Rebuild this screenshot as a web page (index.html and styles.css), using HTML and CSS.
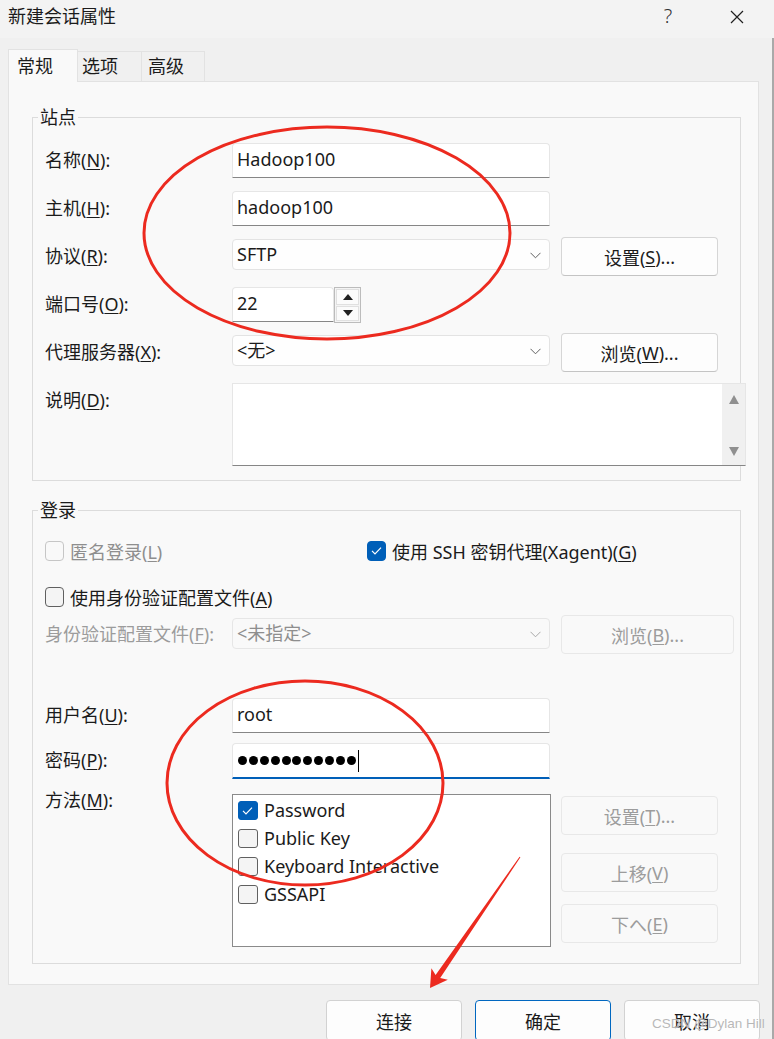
FILE: index.html
```html
<!DOCTYPE html>
<html lang="zh-CN">
<head>
<meta charset="utf-8">
<title>新建会话属性</title>
<link rel="stylesheet" href="styles.css">
</head>
<body>
<div class="window">
  <div class="titlebar">
    <span class="title">新建会话属性</span>
    <span class="help">?</span>
    <span class="close"><svg width="16" height="16" viewBox="0 0 16 16"><path d="M2 2 L14 14 M14 2 L2 14" stroke="#1f1f1f" stroke-width="1.2" fill="none"/></svg></span>
  </div>

  <div class="tabs">
    <div class="tab active">常规</div>
    <div class="tab">选项</div>
    <div class="tab">高级</div>
  </div>

  <div class="page">
    <div class="group station">
      <div class="legend">站点</div>

      <div class="row">
        <span class="lbl">名称(<u>N</u>):</span>
        <div class="input">Hadoop100</div>
      </div>
      <div class="row">
        <span class="lbl">主机(<u>H</u>):</span>
        <div class="input">hadoop100</div>
      </div>
      <div class="row">
        <span class="lbl">协议(<u>R</u>):</span>
        <div class="select"><span>SFTP</span><svg class="chev" width="11" height="7" viewBox="0 0 11 7"><path d="M0.5 0.8 L5.5 5.8 L10.5 0.8" stroke="#616161" stroke-width="1" fill="none"/></svg></div>
        <div class="btn">设置(<u>S</u>)...</div>
      </div>
      <div class="row">
        <span class="lbl">端口号(<u>O</u>):</span>
        <div class="input port">22</div>
        <div class="spin">
          <div class="spin-btn"><svg width="10" height="6" viewBox="0 0 10 6"><path d="M0 6 L5 0 L10 6 Z" fill="#1f1f1f"/></svg></div>
          <div class="spin-btn"><svg width="10" height="6" viewBox="0 0 10 6"><path d="M0 0 L5 6 L10 0 Z" fill="#1f1f1f"/></svg></div>
        </div>
      </div>
      <div class="row">
        <span class="lbl">代理服务器(<u>X</u>):</span>
        <div class="select"><span>&lt;无&gt;</span><svg class="chev" width="11" height="7" viewBox="0 0 11 7"><path d="M0.5 0.8 L5.5 5.8 L10.5 0.8" stroke="#616161" stroke-width="1" fill="none"/></svg></div>
        <div class="btn">浏览(<u>W</u>)...</div>
      </div>
      <div class="row desc-row">
        <span class="lbl">说明(<u>D</u>):</span>
        <div class="textarea">
          <div class="ta-body"></div>
          <div class="ta-scroll">
            <svg width="10" height="9" viewBox="0 0 10 9"><path d="M0 9 L5 0 L10 9 Z" fill="#8f8f8f"/></svg>
            <svg width="10" height="9" viewBox="0 0 10 9"><path d="M0 0 L5 9 L10 0 Z" fill="#8f8f8f"/></svg>
          </div>
        </div>
      </div>
    </div>

    <div class="group login">
      <div class="legend">登录</div>

      <div class="cbrow first">
        <div class="cbitem anon disabled">
          <span class="cb"></span><span>匿名登录(<u>L</u>)</span>
        </div>
        <div class="cbitem">
          <span class="cb checked"><svg width="19" height="19" viewBox="0 0 19 19"><path d="M5 9.8 L8 12.8 L14 6.6" stroke="#fff" stroke-width="1.2" fill="none"/></svg></span><span>使用 SSH 密钥代理(Xagent)(<u>G</u>)</span>
        </div>
      </div>
      <div class="cbrow second">
        <div class="cbitem">
          <span class="cb"></span><span>使用身份验证配置文件(<u>A</u>)</span>
        </div>
      </div>
      <div class="row profile-row">
        <span class="lbl disabled">身份验证配置文件(<u>F</u>):</span>
        <div class="select disabled"><span>&lt;未指定&gt;</span><svg class="chev" width="11" height="7" viewBox="0 0 11 7"><path d="M0.5 0.8 L5.5 5.8 L10.5 0.8" stroke="#a8a8a8" stroke-width="1" fill="none"/></svg></div>
        <div class="btn disabled wide">浏览(<u>B</u>)...</div>
      </div>
      <div class="row user-row">
        <span class="lbl">用户名(<u>U</u>):</span>
        <div class="input">root</div>
      </div>
      <div class="row pass-row">
        <span class="lbl">密码(<u>P</u>):</span>
        <div class="input focused">
          <span class="dots"><i></i><i></i><i></i><i></i><i></i><i></i><i></i><i></i><i></i><i></i><i></i></span><span class="caret"></span>
        </div>
      </div>
      <div class="row method-row">
        <span class="lbl method-lbl">方法(<u>M</u>):</span>
        <div class="list">
          <div class="li"><span class="cb small checked"><svg width="19" height="19" viewBox="0 0 19 19"><path d="M5 9.8 L8 12.8 L14 6.6" stroke="#fff" stroke-width="1.2" fill="none"/></svg></span><span>Password</span></div>
          <div class="li"><span class="cb small"></span><span>Public Key</span></div>
          <div class="li"><span class="cb small"></span><span>Keyboard Interactive</span></div>
          <div class="li"><span class="cb small"></span><span>GSSAPI</span></div>
        </div>
        <div class="side-btns">
          <div class="btn disabled b1">设置(<u>T</u>)...</div>
          <div class="btn disabled b2">上移(<u>V</u>)</div>
          <div class="btn disabled b3">下へ(<u>E</u>)</div>
        </div>
      </div>
    </div>
  </div>

  <div class="footer">
    <div class="fbtn">连接</div>
    <div class="fbtn default">确定</div>
    <div class="fbtn">取消</div>
  </div>

  <div class="edge"></div>

  <svg class="annot" width="774" height="1039" viewBox="0 0 774 1039">
    <ellipse cx="327" cy="233" rx="183" ry="106" fill="none" stroke="#ec2a1f" stroke-width="3"/>
    <ellipse cx="305" cy="783" rx="138" ry="102" fill="none" stroke="#ec2a1f" stroke-width="3"/>
    <polygon points="430,988 447.8,979.7 440.2,978.1 520.4,857.3 519.6,856.7 435.6,974.9 431.4,968.3" fill="#ec2a1f"/>
  </svg>
  <div class="watermark">CSDN @Dylan Hill</div>
</div>
</body>
</html>
```

FILE: styles.css
```css
html, body {
  margin: 0;
  padding: 0;
}
body {
  background: #f0f0f0;
  font-family: "Noto Sans", "Noto Sans CJK SC", sans-serif;
  font-size: 18px;
  color: #1b1b1b;
}
u {
  text-decoration: underline;
  text-underline-offset: 2px;
  text-decoration-thickness: 1px;
}
.window {
  position: relative;
  width: 774px;
  height: 1039px;
  overflow: hidden;
  background: #f0f0f0;
}

/* title bar */
.titlebar {
  height: 38px;
  background: #f3f3f3;
  display: flex;
  align-items: flex-start;
  line-height: 32px;
}
.title {
  margin-left: 8px;
  font-size: 18px;
  flex: 1;
}
.help {
  font-size: 20px;
  font-weight: 300;
  color: #333;
  width: 20px;
  text-align: center;
  margin-right: 51px;
  font-family: "Noto Sans", sans-serif;
}
.close {
  width: 16px;
  height: 16px;
  margin-top: 9px;
  margin-right: 29px;
}
.close svg { display: block; }

/* tabs */
.tabs {
  margin-top: 12px;
  height: 31px;
  padding-left: 8px;
  display: flex;
  align-items: flex-end;
  position: relative;
  z-index: 2;
}
.tab {
  box-sizing: border-box;
  height: 30px;
  border: 1px solid #e2e2e2;
  border-bottom: none;
  background: #f0f0f0;
  line-height: 28px;
  text-align: left;
  margin-left: -1px;
}
.tab.active {
  width: 70px;
  height: 33px;
  margin-left: 0;
  margin-bottom: -1px;
  background: #f9f9f9;
  line-height: 32px;
  padding-left: 8px;
}
.tab:nth-child(2) { width: 65px; padding-left: 4px; }
.tab:nth-child(3) { width: 64px; padding-left: 6px; }

/* page */
.page {
  box-sizing: border-box;
  margin-left: 8px;
  width: 751px;
  height: 904px;
  border: 1px solid #e2e2e2;
  background: #f9f9f9;
  padding: 35px 0 0 23px;
}
.group {
  box-sizing: border-box;
  width: 709px;
  border: 1px solid #dcdcdc;
  padding: 0 0 14px 12px;
}
.legend {
  width: fit-content;
  height: 24px;
  line-height: 24px;
  margin: -13px 0 0 -7px;
  padding: 0 2px;
  background: #f9f9f9;
}
.station .legend + .row { margin-top: 14px; }
.login {
  margin-top: 29px;
  padding-bottom: 16px;
}

/* rows */
.row {
  display: flex;
  align-items: flex-start;
  height: 35px;
  margin-bottom: 13px;
}
.row > * { flex: none; }
.row:last-child { margin-bottom: 0; }
.lbl {
  width: 187px;
  height: 35px;
  line-height: 35px;
  white-space: nowrap;
}
.lbl.disabled { color: #9c9c9c; }
.input {
  box-sizing: border-box;
  width: 318px;
  height: 35px;
  background: #ffffff;
  border: 1px solid #e6e6e6;
  border-bottom-color: #868686;
  border-radius: 4px 4px 0 0;
  padding-left: 4px;
  line-height: 31px;
}
.input.port { width: 102px; }
.spin {
  box-sizing: border-box;
  width: 27px;
  height: 36px;
  border: 1px solid #bcbcbc;
  background: #f4f4f4;
  padding: 1px;
  display: flex;
  flex-direction: column;
  gap: 1px;
}
.spin-btn {
  flex: 1;
  background: #fbfbfb;
  border: 1px solid #e0e0e0;
  display: flex;
  align-items: center;
  justify-content: center;
}
.spin-btn svg { display: block; }

.select {
  box-sizing: border-box;
  width: 318px;
  height: 31px;
  background: #fefefe;
  border: 1px solid #e3e3e3;
  border-radius: 4px;
  padding: 0 8px 0 4px;
  display: flex;
  align-items: center;
  justify-content: space-between;
  line-height: 29px;
}
.select .chev { display: block; margin-top: 1px; }
.select.disabled {
  background: #f9f9f9;
  border-color: #e6e6e6;
  color: #8e8e8e;
}

.btn {
  box-sizing: border-box;
  width: 157px;
  height: 39px;
  margin-left: 11px;
  margin-top: -2px;
  border: 1px solid #d6d6d6;
  border-bottom-color: #c4c4c4;
  border-radius: 4px;
  background: #fdfdfd;
  display: flex;
  align-items: center;
  justify-content: center;
  flex: none;
}
.btn.disabled {
  background: #f9f9f9;
  border-color: #e8e8e8;
  color: #9c9c9c;
}
.btn.wide { width: 173px; margin-top: -3px; }

.desc-row { height: 83px; }
.textarea {
  box-sizing: border-box;
  width: 514px;
  height: 83px;
  background: #ffffff;
  border: 1px solid #e6e6e6;
  border-bottom-color: #868686;
  display: flex;
}
.ta-body { flex: 1; }
.ta-scroll {
  width: 23px;
  background: #f0f0f0;
  display: flex;
  flex-direction: column;
  align-items: center;
  justify-content: space-between;
  padding: 11px 0 9px;
}
.ta-scroll svg { display: block; }

/* login group */
.cbrow {
  display: flex;
  align-items: center;
  height: 24px;
}
.cbrow.first { margin-top: 17px; }
.cbrow.second { margin-top: 22px; }
.cbitem {
  display: flex;
  align-items: center;
  white-space: nowrap;
}
.cbitem.anon { width: 322px; }
.cbitem.disabled { color: #8e8e8e; }
.cb {
  box-sizing: border-box;
  width: 19px;
  height: 20px;
  border: 1px solid #606060;
  border-radius: 4px;
  background: #f4f4f4;
  margin-right: 6px;
  flex: none;
  position: relative;
}
.cbitem.disabled .cb {
  border-color: #c6c6c6;
  background: #f9f9f9;
}
.cb.checked {
  background: #005fb8;
  border-color: #005fb8;
}
.cb svg {
  position: absolute;
  left: -1px;
  top: -1px;
}

.profile-row { margin-top: 9px; height: 31px; }
.profile-row .lbl { height: 31px; line-height: 33px; }
.user-row { margin-top: 49px; margin-bottom: 10px; }
.pass-row { height: 36px; margin-bottom: 15px; }
.input.focused {
  height: 36px;
  border-bottom: 2px solid #005fb8;
  display: flex;
  align-items: center;
  padding-left: 5px;
}
.dots {
  display: flex;
  gap: 1.9px;
}
.dots i {
  display: block;
  width: 9px;
  height: 9px;
  border-radius: 50%;
  background: #000;
}
.caret {
  width: 1px;
  height: 22px;
  background: #000;
  margin-left: 2px;
}

.method-row { height: 153px; }
.method-lbl {
  height: 24px;
  line-height: 24px;
  margin-top: -6px;
}
.list {
  box-sizing: border-box;
  width: 319px;
  height: 153px;
  background: #ffffff;
  border: 1px solid #8a8a8a;
  padding: 1px 0 0 5px;
}
.li {
  height: 28px;
  display: flex;
  align-items: center;
  white-space: nowrap;
}
.cb.small {
  width: 20px;
  height: 19px;
  border-radius: 3px;
  margin-right: 6px;
}
.side-btns {
  display: flex;
  flex-direction: column;
  margin-left: 10px;
}
.side-btns .btn { margin-left: 0; margin-top: 0; }
.side-btns .b1 { margin-top: 2px; }
.side-btns .b2 { margin-top: 18px; }
.side-btns .b3 { margin-top: 12px; }

/* footer */
.footer {
  display: flex;
  justify-content: flex-end;
  gap: 13px;
  padding-right: 14px;
  margin-top: 15px;
}
.fbtn {
  box-sizing: border-box;
  width: 136px;
  height: 41px;
  border: 1px solid #d2d2d2;
  border-radius: 4px;
  background: #fdfdfd;
  display: flex;
  align-items: center;
  justify-content: center;
}
.fbtn.default {
  border-color: #0067c0;
}

.edge {
  position: absolute;
  right: 0;
  top: 38px;
  width: 2px;
  bottom: 0;
  background: #a9a9a9;
}
.annot {
  position: absolute;
  left: 0;
  top: 0;
  pointer-events: none;
}
.watermark {
  position: absolute;
  left: 652px;
  top: 1016px;
  font-family: "Liberation Sans", Arial, sans-serif;
  font-size: 13.5px;
  color: rgba(160, 160, 160, 0.75);
  white-space: nowrap;
  text-shadow: 0 0 1px #fff;
}
```
